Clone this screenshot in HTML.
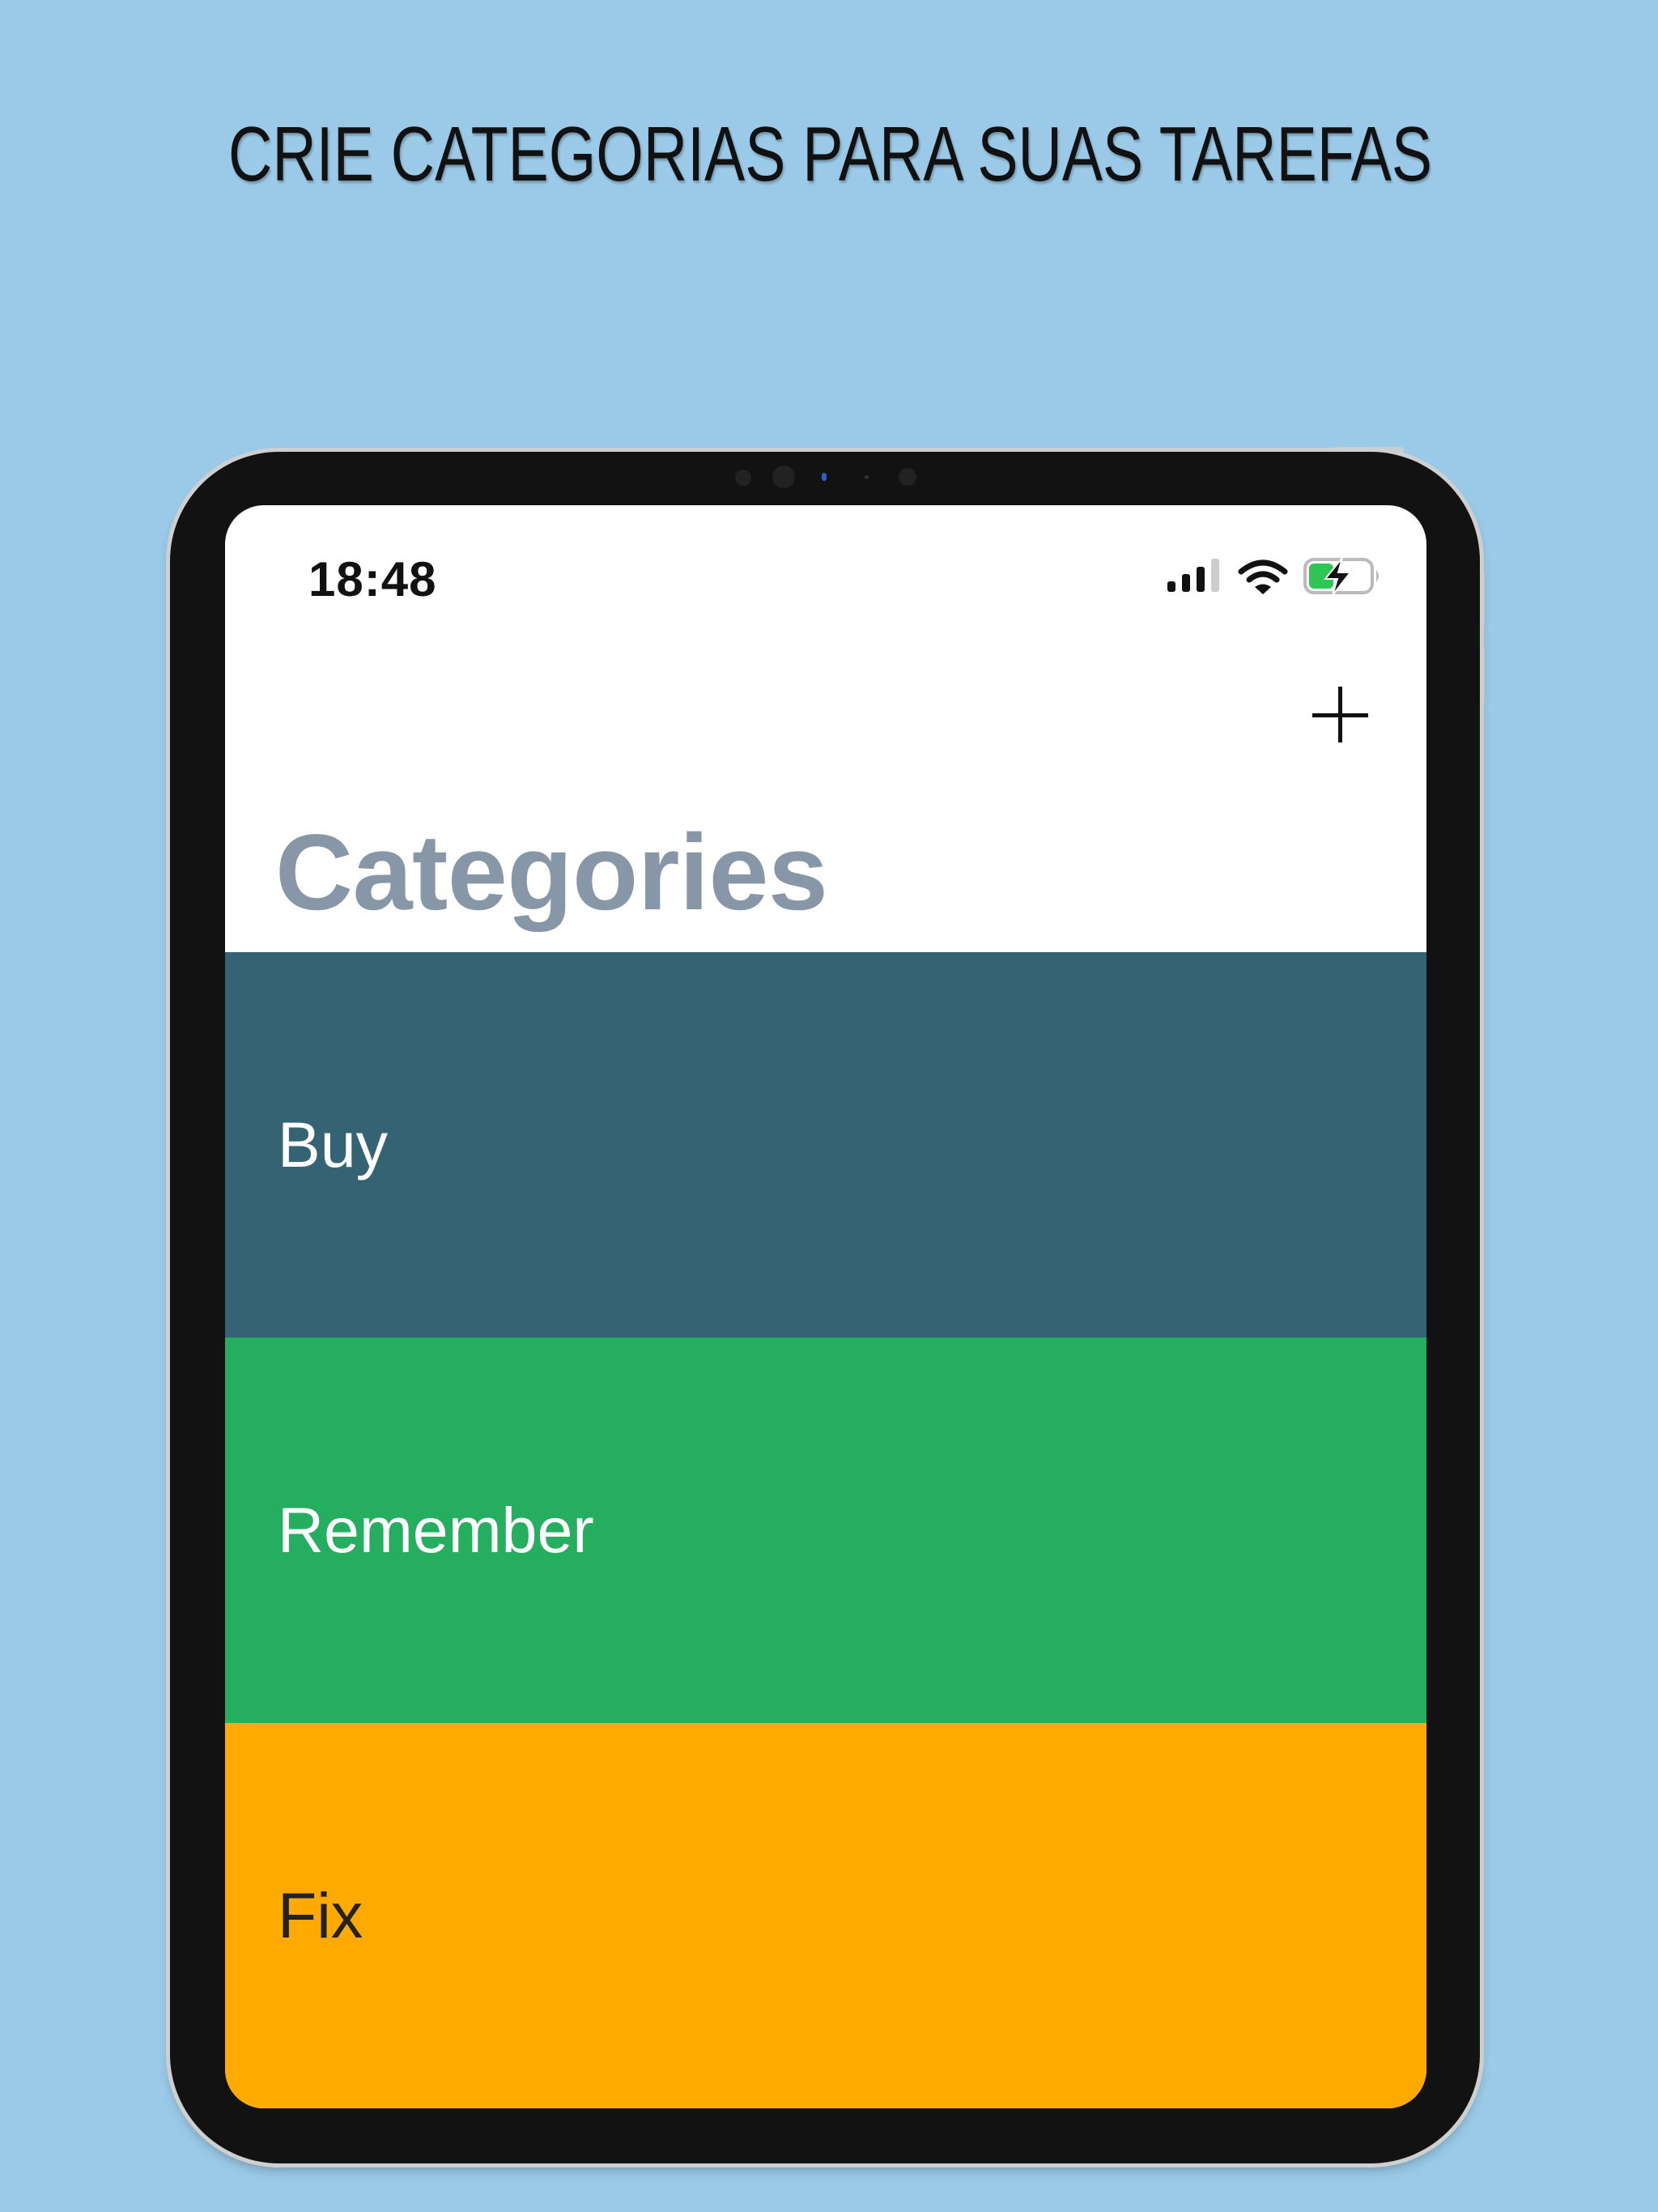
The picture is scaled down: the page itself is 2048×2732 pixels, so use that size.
<!DOCTYPE html>
<html><head><meta charset="utf-8"><style>
html,body{margin:0;padding:0}
body{width:2048px;height:2732px;background:#9acae7;position:relative;overflow:hidden;font-family:"Liberation Sans",sans-serif}
.abs{position:absolute}
.bezel{left:210px;top:558px;width:1618px;height:2114px;background:#121212;border-radius:135px;box-shadow:0 0 0 5px #cfcfcf,0 8px 14px rgba(0,0,0,.25)}
.screen{left:278px;top:624px;width:1484px;height:1980px;border-radius:48px;overflow:hidden;background:#fff}
.row{position:absolute;left:0;width:1484px;height:476px}
.row span{position:absolute;left:65px;top:198px;font-size:79px;line-height:80px}
.dot{position:absolute;border-radius:50%;background:#222}
</style></head><body>
<svg class="abs" style="left:0;top:120px" width="2048" height="140">
<text x="282" y="103" textLength="1487" lengthAdjust="spacingAndGlyphs" font-family="Liberation Sans Narrow,Liberation Sans,sans-serif" font-size="96" fill="#111" style="text-shadow:2px 3px 3px rgba(0,0,0,.25)">CRIE CATEGORIAS PARA SUAS TAREFAS</text>
</svg>
<div class="abs" style="left:1647px;top:552px;width:87px;height:8px;background:#ccc;border-radius:3px"></div>
<div class="abs" style="left:1826px;top:705px;width:8px;height:70px;background:#ccc;border-radius:3px"></div>
<div class="abs" style="left:1826px;top:800px;width:8px;height:70px;background:#ccc;border-radius:3px"></div>
<div class="abs bezel"></div>
<div class="dot" style="left:908px;top:580px;width:20px;height:20px"></div>
<div class="dot" style="left:954px;top:575px;width:28px;height:28px"></div>
<div class="dot" style="left:1015px;top:584px;width:6px;height:10px;background:#2a5fd0;border-radius:3px"></div>
<div class="dot" style="left:1068px;top:587px;width:5px;height:5px;background:#333"></div>
<div class="dot" style="left:1110px;top:578px;width:22px;height:22px"></div>
<div class="abs screen">
  <div class="abs" style="left:103px;top:57px;font-size:60px;font-weight:bold;color:#111;letter-spacing:1px">18:48</div>
  <svg class="abs" style="left:1150px;top:60px" width="300" height="60" viewBox="1428 686 300 60">
    <rect x="1442" y="720" width="10" height="13" rx="3" fill="#111"/>
    <rect x="1460" y="711" width="10" height="22" rx="3" fill="#111"/>
    <rect x="1478" y="702" width="10" height="31" rx="3" fill="#111"/>
    <rect x="1496" y="692" width="10" height="41" rx="3" fill="#ccc"/>
    <path d="M1533 708 Q1560 686 1587 708" stroke="#111" stroke-width="7" fill="none" stroke-linecap="round"/>
    <path d="M1543 718 Q1560 704 1577 718" stroke="#111" stroke-width="7" fill="none" stroke-linecap="round"/>
    <path d="M1550 727 L1560 736 L1570 727 Q1560 720 1550 727Z" fill="#111"/>
    <rect x="1612" y="693" width="83" height="41" rx="11" fill="none" stroke="#bbb" stroke-width="4"/>
    <path d="M1700 706 Q1706 713 1700 721Z" fill="#bbb"/>
    <rect x="1617" y="698" width="30" height="31" rx="6" fill="#2fc654"/>
    <path d="M1658 691 L1637 717 L1652 717 L1646 737 L1668 709 L1653 709 Z" fill="#111" stroke="#fff" stroke-width="2"/>
  </svg>
  <div class="abs" style="left:1375px;top:224px;width:5px;height:69px;background:#111"></div>
  <div class="abs" style="left:1343px;top:257px;width:69px;height:5px;background:#111"></div>
  <div class="abs" style="left:62px;top:378px;font-size:133px;font-weight:bold;color:#8797a8;letter-spacing:-0.5px">Categories</div>
  <div class="row" style="top:552px;background:#346373"><span style="color:#fff">Buy</span></div>
  <div class="row" style="top:1028px;background:#25ae5f"><span style="color:#fff">Remember</span></div>
  <div class="row" style="top:1504px;background:#ffaa00"><span style="color:#222">Fix</span></div>
</div>
</body></html>
